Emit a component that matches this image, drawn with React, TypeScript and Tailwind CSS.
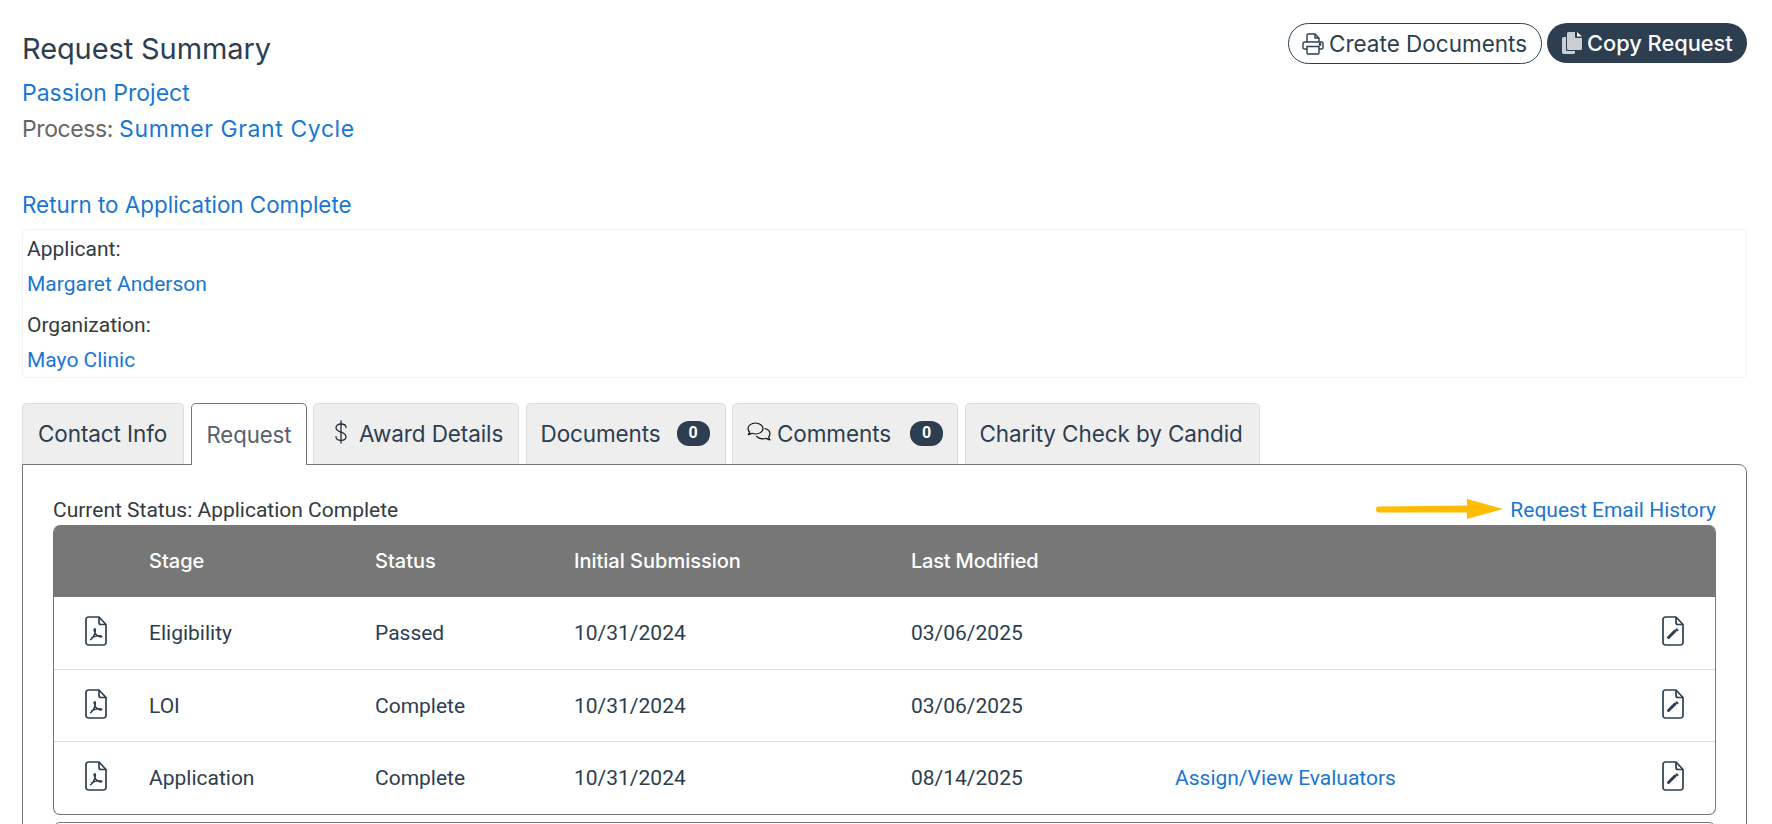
import React from "react";

const heading = "font-['Inter','Noto_Sans',sans-serif]";

const PrintIcon = () => (
  <svg width="22" height="22" viewBox="0 0 22 22" fill="none" stroke="#2c3e50" strokeWidth="1.4" className="shrink-0">
    <path d="M5 9V2.200a1.200 1.200 0 0 1 1.200-1.200H13l4 4v4" />
    <path d="M13 1v4h4" />
    <path d="M5 16H2.600A1.600 1.600 0 0 1 1 14.400V10.600A1.600 1.600 0 0 1 2.600 9h16.800a1.600 1.600 0 0 1 1.600 1.600v3.800a1.600 1.600 0 0 1-1.600 1.600H17" />
    <path d="M5 13.500h12V20a1 1 0 0 1-1 1H6a1 1 0 0 1-1-1z" />
    <circle cx="18" cy="11.500" r="0.700" fill="#2c3e50" />
  </svg>
);

const CopyIcon = () => (
  <svg width="20" height="22" viewBox="0 0 20 22" className="shrink-0">
    <path d="M0 6.500A1.500 1.500 0 0 1 1.500 5H4v12.500A1.500 1.500 0 0 0 5.500 19H13v1.500A1.500 1.500 0 0 1 11.500 22h-10A1.500 1.500 0 0 1 0 20.500z" fill="#ffffff" fillOpacity="0.75" />
    <path d="M6.500 0H13v5a1 1 0 0 0 1 1h6v10.500a1.500 1.500 0 0 1-1.500 1.500h-12A1.500 1.500 0 0 1 5 16.500V1.500A1.500 1.500 0 0 1 6.500 0z" fill="#ffffff" fillOpacity="0.75" />
    <path d="M15 0l5 4.500h-5z" fill="#ffffff" />
  </svg>
);

const DollarIcon = () => (
  <svg width="12" height="24" viewBox="0 0 12 24" fill="none" stroke="#222b36" strokeWidth="1.3" strokeLinecap="round" className="shrink-0 -translate-y-[2px]">
    <path d="M11 7.500C11 5.300 9 4 6 4S1 5.400 1 7.700c0 5.300 10 3.500 10 9 0 2.300-2 3.600-5 3.600s-5-1.300-5-3.600" />
    <path d="M6 1v22" />
  </svg>
);

const CommentsIcon = () => (
  <svg width="24" height="20" viewBox="0 0 24 20" fill="none" stroke="#111" strokeWidth="1.2" strokeLinejoin="round" className="shrink-0 -translate-y-[2px]">
    <path d="M8.500 1C4.400 1 1 3.500 1 6.600c0 1.300.6 2.500 1.600 3.500-.3 1-.9 1.900-1.400 2.500 1.400-.1 2.700-.7 3.600-1.300 1.100.4 2.400.7 3.700.7 4.100 0 7.500-2.500 7.500-5.400S12.600 1 8.500 1z" />
    <path d="M17.500 6.500c3 .6 5.500 2.700 5.500 5.300 0 1.200-.5 2.300-1.400 3.200.2 1 .8 2 1.400 2.800-1.500-.1-2.800-.7-3.700-1.500-1 .4-2.100.6-3.300.6-2.800 0-5.300-1.200-6.500-3" />
  </svg>
);

const PdfIcon = () => (
  <svg width="22" height="30" viewBox="0 0 22 30" fill="none" stroke="#2c3e50" strokeWidth="1.700" strokeLinejoin="round" className="block -translate-y-[3px]">
    <path d="M3.500 1H14l7 7.500V26.500a2.500 2.500 0 0 1-2.500 2.500h-15A2.500 2.500 0 0 1 1 26.500v-23A2.500 2.500 0 0 1 3.500 1z" />
    <path d="M14 1v5.500a2 2 0 0 0 2 2h5" />
    <path d="M5 24c2.500-1.500 4.500-5 5.300-8.500.3-1.600-.1-3-.7-2.800-.8.200-.6 2 .3 3.800 1.300 2.500 3.500 4.300 6.100 4.500 1.400 0 .8-1.400-1-1.400-3 0-6.500.9-9 2.700" strokeWidth="1.400" />
  </svg>
);

const EditIcon = () => (
  <svg width="22" height="30" viewBox="0 0 22 30" fill="none" stroke="#2c3e50" strokeWidth="1.700" strokeLinejoin="round" className="block -translate-y-[3px]">
    <path d="M3.500 1H14l7 7.500V26.500a2.500 2.500 0 0 1-2.500 2.500h-15A2.500 2.500 0 0 1 1 26.500v-23A2.500 2.500 0 0 1 3.500 1z" />
    <path d="M14 1v5.500a2 2 0 0 0 2 2h5" />
    <path d="M6.500 21.500l6.500-6.500" strokeWidth="3" strokeLinecap="round" />
    <path d="M14.500 13.200l1 1" strokeWidth="2" strokeLinecap="round" />
  </svg>
);

const Badge = () => (
  <span className="flex h-[25px] w-[33px] -translate-y-[1px] items-center justify-center rounded-[12px] bg-[#2c3e50] font-['Roboto',sans-serif] text-[16px] font-bold text-white">
    0
  </span>
);

const rows = [
  { stage: "Eligibility", status: "Passed", initial: "10/31/2024", modified: "03/06/2025", assign: false },
  { stage: "LOI", status: "Complete", initial: "10/31/2024", modified: "03/06/2025", assign: false },
  { stage: "Application", status: "Complete", initial: "10/31/2024", modified: "08/14/2025", assign: true },
];

const gridCols = "grid grid-cols-[95px_226px_199px_337px_264px_1fr] items-center";

const tabBase = `flex h-[61px] items-center rounded-t-[5px] border border-b-0 border-[#dddddd] bg-[#eeeeee] text-[22.5px] tracking-[-0.1px] text-[#2c3e50] ${heading}`;

export default function App() {
  return (
    <div className="h-[824px] w-full overflow-hidden bg-white pl-[22px] pr-[25px] font-['Roboto',sans-serif] text-[#2c3e50]">
      <div className="flex items-start justify-between pt-[23px]">
        <div className={heading}>
          <h1 className="flex h-[52px] items-center text-[29px] font-normal tracking-[-0.1px]">Request Summary</h1>
          <a className="flex h-[36px] items-center text-[23px] text-[#1976d2]">Passion Project</a>
          <p className="flex h-[36px] items-center text-[23px] tracking-[-0.4px] text-[#666666]">
            Process:&nbsp;<a className="tracking-[0.6px] text-[#1976d2]">Summer Grant Cycle</a>
          </p>
        </div>
        <div className={`flex items-start gap-[5px] ${heading}`}>
          <button className="flex h-[41px] w-[254px] items-center gap-[5px] rounded-full border border-[#2c3e50] pl-[13px] text-[22.5px] text-[#2c3e50]">
            <PrintIcon />
            Create Documents
          </button>
          <button className="flex h-[40px] w-[200px] items-center gap-[5px] rounded-full bg-[#2c3e50] pl-[15px] text-[21.8px] font-medium text-white">
            <CopyIcon />
            Copy Request
          </button>
        </div>
      </div>

      <a className={`mt-[40px] flex h-[36px] items-center text-[22.4px] text-[#1976d2] ${heading}`}>Return to Application Complete</a>

      <div className="mt-[6px] h-[149px] rounded-[4px] border border-[#f4f4f4] pl-[4px] pt-[2px] text-[21px]">
        <div className="flex h-[36px] items-center text-[#343a40]">Applicant:</div>
        <a className="flex h-[34px] items-center text-[#1976d2]">Margaret Anderson</a>
        <div className="mt-[6px] flex h-[36px] items-center text-[#343a40]">Organization:</div>
        <a className="flex h-[34px] items-center text-[#1976d2]">Mayo Clinic</a>
      </div>

      <div className="mt-[25px] flex gap-[6.5px]">
        <div className={`${tabBase} w-[162px] pl-[15px]`}>Contact Info</div>
        <div className="relative z-10 -mb-px flex h-[62px] w-[116px] items-center rounded-t-[5px] border border-b-0 border-[#777777] bg-white pl-[15px] font-['Inter',sans-serif] text-[22.2px] tracking-[-0.1px] text-[#56616e]">
          Request
        </div>
        <div className={`${tabBase} w-[206px] pl-[21px]`}>
          <DollarIcon />
          <span className="ml-[12px]">Award Details</span>
        </div>
        <div className={`${tabBase} w-[200px] pl-[14px]`}>
          <span className="w-[136px]">Documents</span>
          <Badge />
        </div>
        <div className={`${tabBase} w-[226px] pl-[14px]`}>
          <CommentsIcon />
          <span className="ml-[6px] w-[133px]">Comments</span>
          <Badge />
        </div>
        <div className={`${tabBase} w-[295px] pl-[14px]`}>Charity Check by Candid</div>
      </div>

      <div className="h-[400px] rounded-tr-[8px] border border-[#777777] px-[30px] pt-[30px]">
        <div className="relative flex h-[30px] items-center justify-between pt-[2px] text-[21px]">
          <span className="text-[#343a40]">Current Status: Application Complete</span>
          <svg width="127" height="20" viewBox="0 0 127 20" className="absolute right-[213px] top-[4px]">
            <path d="M0 10.500a3 3 0 0 1 3-3L91 6.500V0l36 10-36 10v-6.500L3 13.500a3 3 0 0 1-3-3z" fill="#ffbc00" />
          </svg>
          <a className="text-[#1976d2]">Request Email History</a>
        </div>

        <div className="overflow-hidden rounded-[7px] border border-t-0 border-[#777777]">
          <div className={`${gridCols} -mx-px h-[72px] bg-[#777777] pl-px text-[20px] font-medium text-white ${heading}`}>
            <span />
            <span>Stage</span>
            <span>Status</span>
            <span>Initial Submission</span>
            <span className="tracking-[-0.2px]">Last Modified</span>
            <span />
          </div>
          {rows.map((row, i) => (
            <div key={row.stage} className={`${gridCols} pt-[2px] text-[21px] ${i === 0 ? "h-[73px]" : "h-[72px]"} ${i < rows.length - 1 ? "border-b border-[#dddddd]" : ""}`}>
              <span className="pl-[31px]"><PdfIcon /></span>
              <span>{row.stage}</span>
              <span>{row.status}</span>
              <span>{row.initial}</span>
              <span>{row.modified}</span>
              <div className="flex items-center justify-between pr-[31px]">
                {row.assign ? <a className="text-[#1976d2]">Assign/View Evaluators</a> : <span />}
                <EditIcon />
              </div>
            </div>
          ))}
        </div>

        <div className="mt-[7px] h-[60px] rounded-t-[7px] border border-[#777777]" />
      </div>
    </div>
  );
}
